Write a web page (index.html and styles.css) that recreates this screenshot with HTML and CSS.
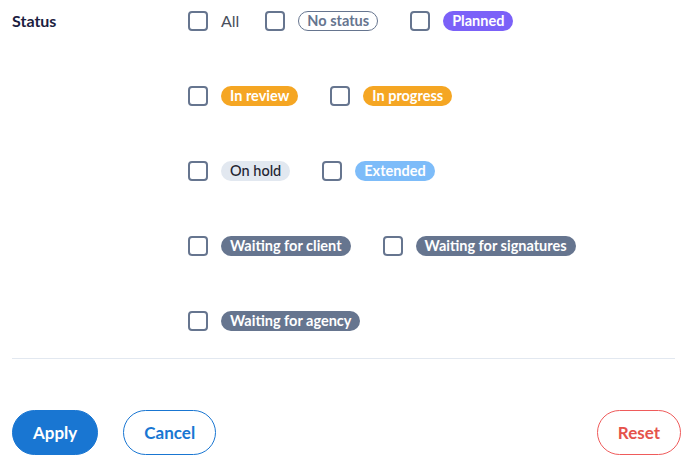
FILE: index.html
```html
<!DOCTYPE html>
<html lang="en">
<head>
<meta charset="utf-8">
<title>Status filter</title>
<link rel="stylesheet" href="styles.css">
</head>
<body>
<div class="filter">
  <div class="field">
    <div class="label">Status</div>
    <div class="options">
      <div class="row">
        <label class="item item-all"><span class="box"></span><span class="plain">All</span></label>
        <label class="item"><span class="box"></span><span class="badge b-none">No status</span></label>
        <label class="item"><span class="box"></span><span class="badge b-planned">Planned</span></label>
      </div>
      <div class="row">
        <label class="item"><span class="box"></span><span class="badge b-orange">In review</span></label>
        <label class="item"><span class="box"></span><span class="badge b-orange">In progress</span></label>
      </div>
      <div class="row">
        <label class="item"><span class="box"></span><span class="badge b-hold">On hold</span></label>
        <label class="item"><span class="box"></span><span class="badge b-extended">Extended</span></label>
      </div>
      <div class="row">
        <label class="item"><span class="box"></span><span class="badge b-wait">Waiting for client</span></label>
        <label class="item"><span class="box"></span><span class="badge b-wait">Waiting for signatures</span></label>
      </div>
      <div class="row">
        <label class="item"><span class="box"></span><span class="badge b-wait">Waiting for agency</span></label>
      </div>
    </div>
  </div>
  <div class="divider"></div>
  <div class="actions">
    <button class="btn btn-apply">Apply</button>
    <button class="btn btn-cancel">Cancel</button>
    <span class="spacer"></span>
    <button class="btn btn-reset">Reset</button>
  </div>
</div>
</body>
</html>
```
FILE: styles.css
```css
* { box-sizing: border-box; }
html, body { margin: 0; background: #fff; }
body {
  font-family: Lato, "Open Sans", "Liberation Sans", sans-serif;
  padding: 11px 4px 0 12px;
}
.field {
  display: grid;
  grid-template-columns: 176px 1fr;
}
.label {
  font-size: 16px;
  font-weight: 700;
  line-height: 20px;
  color: #1b2040;
}
.options {
  display: flex;
  flex-direction: column;
  gap: 55px;
}
.row {
  display: flex;
  align-items: center;
  height: 20px;
}
.item {
  display: flex;
  align-items: center;
  gap: 13px;
  margin-right: 32px;
}
.item-all { margin-right: 26px; }
.box {
  width: 20px;
  height: 20px;
  border: 2px solid #66758f;
  border-radius: 4px;
  background: #fff;
}
.plain {
  font-size: 16px;
  color: #4a4f5c;
  line-height: 20px;
}
.badge {
  display: inline-block;
  height: 20px;
  line-height: 20px;
  padding: 0 9px;
  border-radius: 10px;
  font-size: 14.5px;
  font-weight: 700;
  color: #fff;
  white-space: nowrap;
}
.b-none {
  background: #fff;
  color: #66758f;
  border: 1px solid #66758f;
  line-height: 18px;
  padding: 0 8px;
}
.b-planned { background: #7b61f8; }
.b-orange { background: #f5a623; }
.b-hold { background: #e2e8f0; color: #1f2533; font-weight: 500; }
.b-extended { background: #7dbcf9; }
.b-wait { background: #66758f; }
.divider {
  margin: 27px 6px 0 0;
  border-top: 1px solid #e2e8f0;
}
.actions {
  display: flex;
  align-items: center;
  gap: 25px;
  margin-top: 51px;
}
.spacer { flex: 1; }
.btn {
  height: 45px;
  border-radius: 23px;
  padding: 0 20px;
  font-family: inherit;
  font-size: 17px;
  font-weight: 700;
  border: 1px solid;
  background: #fff;
}
.btn-apply { background: #1976d2; border-color: #1976d2; color: #fff; }
.btn-cancel { border-color: #1976d2; color: #1976d2; }
.btn-reset { border-color: #ef5b5b; color: #e5534b; }
```
